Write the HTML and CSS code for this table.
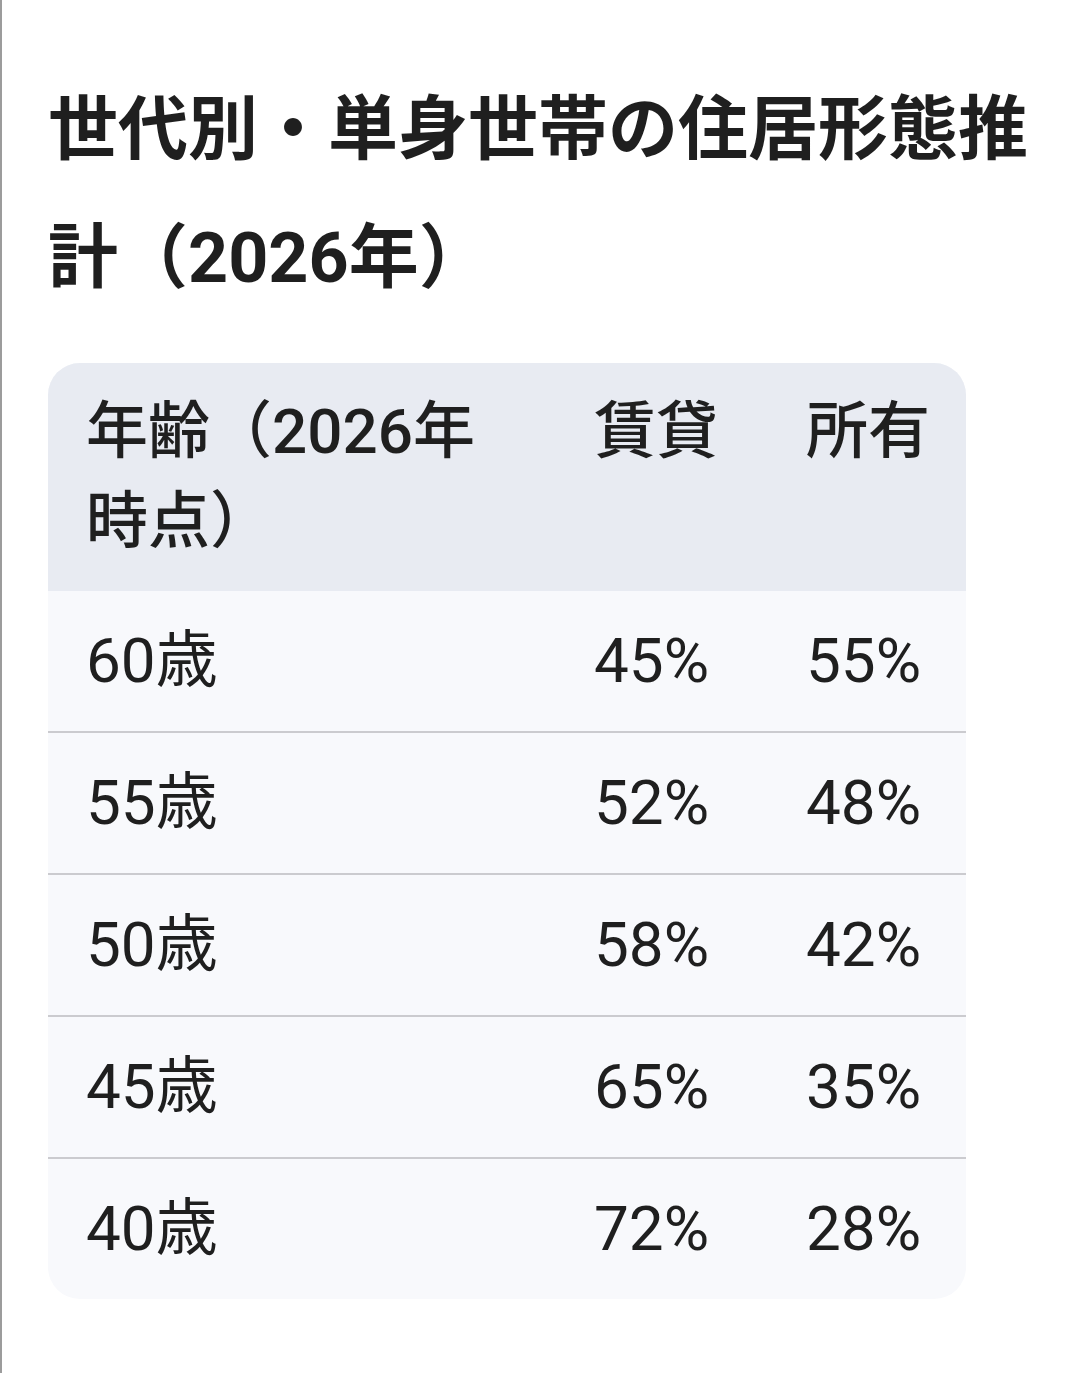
FILE: index.html
```html
<!DOCTYPE html>
<html lang="ja">
<head>
<meta charset="utf-8">
<title>世代別・単身世帯の住居形態推計（2026年）</title>
<link rel="stylesheet" href="styles.css">
</head>
<body>
<main class="page">
  <h1 class="title">世代別・単身世帯の住居形態推計（2026年）</h1>
  <div class="table">
    <div class="row head">
      <div class="cell">年齢（2026年時点）</div>
      <div class="cell">賃貸</div>
      <div class="cell">所有</div>
    </div>
    <div class="row">
      <div class="cell">60歳</div>
      <div class="cell">45%</div>
      <div class="cell">55%</div>
    </div>
    <div class="row">
      <div class="cell">55歳</div>
      <div class="cell">52%</div>
      <div class="cell">48%</div>
    </div>
    <div class="row">
      <div class="cell">50歳</div>
      <div class="cell">58%</div>
      <div class="cell">42%</div>
    </div>
    <div class="row">
      <div class="cell">45歳</div>
      <div class="cell">65%</div>
      <div class="cell">35%</div>
    </div>
    <div class="row">
      <div class="cell">40歳</div>
      <div class="cell">72%</div>
      <div class="cell">28%</div>
    </div>
  </div>
</main>
</body>
</html>
```

FILE: styles.css
```css
html, body {
  margin: 0;
  padding: 0;
  background: #ffffff;
}

body {
  min-height: 1373px;
  border-left: 2px solid #9c9c9c;
  box-sizing: border-box;
  font-family: "Roboto", "Noto Sans CJK JP", sans-serif;
  color: #1f1f1f;
}

.page {
  padding: 66px 32px 40px 46px;
}

.title {
  margin: 0;
  font-size: 70px;
  line-height: 128px;
  font-weight: 700;
  color: #1f1f1f;
  letter-spacing: 0;
}

.table {
  margin-top: 41px;
  width: 918px;
  border-radius: 32px;
  overflow: hidden;
  background: #f8f9fc;
}

.row {
  display: grid;
  grid-template-columns: 508px 212px 198px;
  font-size: 62px;
  line-height: 90px;
  font-weight: 400;
}

.row + .row:not(.head) {
  border-top: 2px solid #cbcbcf;
}

.row.head + .row {
  border-top: none;
}

.cell {
  padding: 25px 10px 25px 38px;
  color: #1f1f1f;
}

.head {
  background: #e8ebf2;
  font-weight: 500;
}

.head .cell {
  padding: 24px 10px 24px 38px;
}

.head .cell:first-child {
  padding-right: 66px;
}
```
